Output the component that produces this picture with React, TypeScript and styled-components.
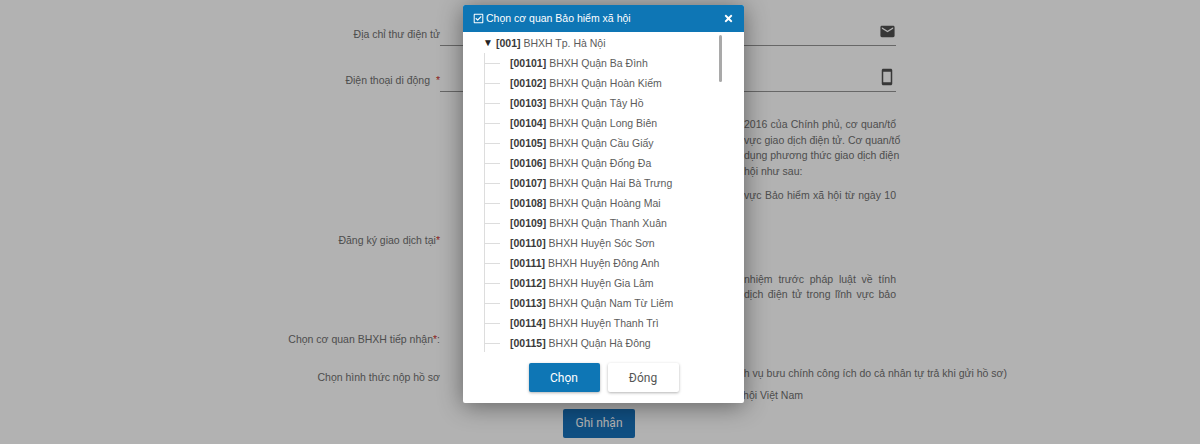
import React from "react";
import styled, { createGlobalStyle } from "styled-components";
import { MdEmail, MdSmartphone } from "react-icons/md";
import { FaRegCheckSquare, FaTimes } from "react-icons/fa";

const agencies = [
  ["00101", "BHXH Quận Ba Đình"],
  ["00102", "BHXH Quận Hoàn Kiếm"],
  ["00103", "BHXH Quận Tây Hồ"],
  ["00104", "BHXH Quận Long Biên"],
  ["00105", "BHXH Quận Cầu Giấy"],
  ["00106", "BHXH Quận Đống Đa"],
  ["00107", "BHXH Quận Hai Bà Trưng"],
  ["00108", "BHXH Quận Hoàng Mai"],
  ["00109", "BHXH Quận Thanh Xuân"],
  ["00110", "BHXH Huyện Sóc Sơn"],
  ["00111", "BHXH Huyện Đông Anh"],
  ["00112", "BHXH Huyện Gia Lâm"],
  ["00113", "BHXH Quận Nam Từ Liêm"],
  ["00114", "BHXH Huyện Thanh Trì"],
  ["00115", "BHXH Quận Hà Đông"],
];

const App: React.FC = () => {
  return (
    <Page>
      <GlobalStyle />
      <Form>
        <FieldRow $height={46}>
          <Label>Địa chỉ thư điện tử</Label>
          <InputLine>
            <MdEmail size={17} />
          </InputLine>
        </FieldRow>
        <FieldRow $height={46}>
          <Label>
            Điện thoại di động <Star>&nbsp;*</Star>
          </Label>
          <InputLine>
            <MdSmartphone size={18} />
          </InputLine>
        </FieldRow>
        <TextRow $top={25}>
          <JustifiedLine>2016 của Chính phủ, cơ quan/tổ</JustifiedLine>
          <JustifiedLine>vực giao dịch điện tử. Cơ quan/tổ</JustifiedLine>
          <JustifiedLine>dụng phương thức giao dịch điện</JustifiedLine>
          <PlainLine>hội như sau:</PlainLine>
          <JustifiedLine $top={9}>vực Bảo hiểm xã hội từ ngày 10</JustifiedLine>
        </TextRow>
        <FieldRow $height={16} $top={28}>
          <Label>
            Đăng ký giao dịch tại<Star>*</Star>
          </Label>
        </FieldRow>
        <TextRow $top={24}>
          <JustifiedLine>nhiệm trước pháp luật về tính</JustifiedLine>
          <JustifiedLine>dịch điện tử trong lĩnh vực bảo</JustifiedLine>
        </TextRow>
        <FieldRow $height={16} $top={28}>
          <Label>
            Chọn cơ quan BHXH tiếp nhận<Star>*</Star>:
          </Label>
        </FieldRow>
        <FieldRow $height={16} $top={18}>
          <Label>Chọn hình thức nộp hồ sơ</Label>
          <OptionText>dịch vụ bưu chính công ích do cả nhân tự trả khi gửi hồ sơ)</OptionText>
        </FieldRow>
        <RadioRow>
          <Radio />
          <RadioText>hội Việt Nam</RadioText>
        </RadioRow>
        <SubmitRow>
          <SubmitButton type="button">Ghi nhận</SubmitButton>
        </SubmitRow>
      </Form>
      <Overlay />
      <Modal>
        <ModalHeader>
          <ModalTitle>
            <FaRegCheckSquare size={11} />
            Chọn cơ quan Bảo hiểm xã hội
          </ModalTitle>
          <FaTimes size={11} />
        </ModalHeader>
        <TreeBox>
          <RootNode>
            <Caret>▼</Caret>
            <b>[001]</b> BHXH Tp. Hà Nội
          </RootNode>
          {agencies.map(([code, name]) => (
            <TreeNode key={code}>
              <b>[{code}]</b> {name}
            </TreeNode>
          ))}
          <ScrollThumb />
        </TreeBox>
        <ModalFooter>
          <PrimaryButton type="button">Chọn</PrimaryButton>
          <SecondaryButton type="button">Đóng</SecondaryButton>
        </ModalFooter>
      </Modal>
    </Page>
  );
};

export default App;

const GlobalStyle = createGlobalStyle`
  body {
    margin: 0;
    font-family: "Liberation Sans", Arial, sans-serif;
  }
`;

const Page = styled.div`
  position: relative;
  width: 1200px;
  height: 444px;
  overflow: hidden;
  background: #fff;
  color: #707070;
  font-size: 10.5px;
`;

const Form = styled.div`
  padding-top: 0;
`;

const FieldRow = styled.div<{ $height: number; $top?: number }>`
  display: grid;
  grid-template-columns: 440px 456px;
  align-items: end;
  height: ${(p) => p.$height}px;
  margin-top: ${(p) => p.$top || 0}px;
`;

const Label = styled.div`
  text-align: right;
  line-height: 16px;
  white-space: nowrap;
  align-self: end;
  padding-bottom: 4px;
`;

const Star = styled.span`
  color: #c9302c;
`;

const InputLine = styled.div`
  display: flex;
  justify-content: flex-end;
  align-items: flex-end;
  height: 30px;
  border-bottom: 1px solid #949494;
  color: #4f4f4f;
  padding-bottom: 5px;
  box-sizing: border-box;
`;

const TextRow = styled.div<{ $top: number }>`
  margin-top: ${(p) => p.$top}px;
  margin-left: 640px;
  width: 256px;
  line-height: 15.5px;
`;

const JustifiedLine = styled.div<{ $top?: number }>`
  text-align: justify;
  text-align-last: justify;
  white-space: nowrap;
  margin-top: ${(p) => p.$top || 0}px;
  padding-left: 104px;
`;

const PlainLine = styled.div`
  padding-left: 104px;
`;

const OptionText = styled.div`
  justify-self: start;
  width: 567px;
  text-align: right;
  white-space: nowrap;
  line-height: 16px;
  padding-bottom: 8px;
`;

const RadioRow = styled.div`
  display: flex;
  align-items: center;
  height: 21px;
  margin-left: 464px;
  margin-top: 4px;
`;

const Radio = styled.span`
  width: 14px;
  height: 14px;
  border-radius: 50%;
  background: #333;
  flex: none;
`;

const RadioText = styled.span`
  width: 325px;
  text-align: right;
  white-space: nowrap;
`;

const SubmitRow = styled.div`
  display: flex;
  justify-content: center;
  margin-top: 3px;
  padding-right: 2px;
`;

const SubmitButton = styled.button`
  width: 72px;
  height: 29px;
  border: none;
  border-radius: 2px;
  background: #1771ba;
  color: #fff;
  font-family: Roboto, sans-serif;
  font-size: 12px;
`;

const Overlay = styled.div`
  position: absolute;
  inset: 0;
  background: rgba(0, 0, 0, 0.3);
`;

const Modal = styled.div`
  position: absolute;
  left: 463px;
  top: 5px;
  width: 281px;
  height: 398px;
  background: #fff;
  border-radius: 2px;
  box-shadow: 0 3px 24px rgba(0, 0, 0, 0.45);
  display: flex;
  flex-direction: column;
`;

const ModalHeader = styled.div`
  flex: none;
  height: 27px;
  padding: 0 10px;
  display: flex;
  align-items: center;
  justify-content: space-between;
  background: #0e76b5;
  color: #fff;
  border-radius: 2px 2px 0 0;
`;

const ModalTitle = styled.div`
  display: flex;
  align-items: center;
  gap: 2px;
  font-size: 10.5px;
  line-height: 12px;
  padding-bottom: 1px;
`;

const TreeBox = styled.div`
  position: relative;
  height: 320px;
  overflow: hidden;
  color: #5c5c5c;
  b {
    color: #3a3a3a;
  }
`;

const RootNode = styled.div`
  position: relative;
  height: 20px;
  line-height: 20px;
  margin-top: 1px;
  padding-left: 33px;
`;

const Caret = styled.span`
  position: absolute;
  left: 20px;
  font-size: 10px;
  color: #222;
`;

const TreeNode = styled.div`
  position: relative;
  height: 20px;
  line-height: 20px;
  padding-left: 47px;
  &::before {
    content: "";
    position: absolute;
    left: 21px;
    top: 0;
    height: 100%;
    border-left: 1px solid #ddd;
  }
  &::after {
    content: "";
    position: absolute;
    left: 21px;
    top: 10px;
    width: 16px;
    border-top: 1px solid #ddd;
  }
`;

const ScrollThumb = styled.div`
  position: absolute;
  right: 22px;
  top: 3px;
  width: 3px;
  height: 47px;
  border-radius: 2px;
  background: #a9a9a9;
`;

const ModalFooter = styled.div`
  display: flex;
  justify-content: center;
  gap: 8px;
  padding-top: 11px;
`;

const PrimaryButton = styled.button`
  width: 71px;
  height: 29px;
  border: none;
  border-radius: 2px;
  background: #0e76b5;
  color: #fff;
  font-family: Roboto, sans-serif;
  font-size: 12px;
  box-shadow: 0 1px 3px rgba(0, 0, 0, 0.3);
`;

const SecondaryButton = styled(PrimaryButton)`
  background: #fff;
  color: #555;
`;
